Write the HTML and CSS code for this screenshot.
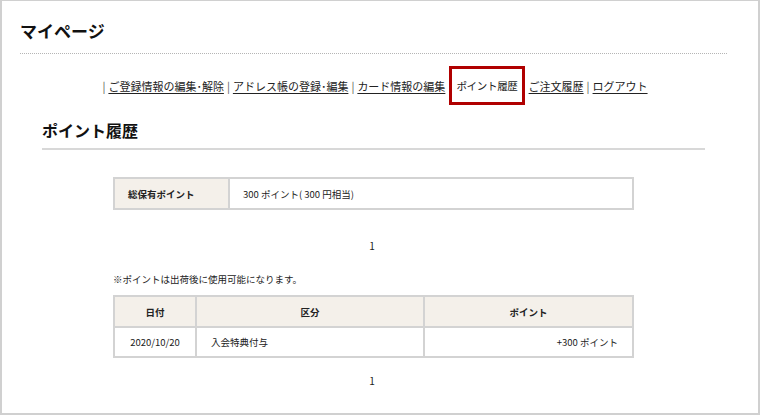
FILE: index.html
```html
<!DOCTYPE html>
<html lang="ja">
<head>
<meta charset="utf-8">
<title>マイページ</title>
<link rel="stylesheet" href="styles.css">
</head>
<body>
<div class="frame">
  <header class="page-head">
    <h1 class="page-title">マイページ</h1>
  </header>
  <nav class="mynav">
    <span class="sep">|</span>
    <a href="#" class="nav-link">ご登録情報の編集･解除</a>
    <span class="sep">|</span>
    <a href="#" class="nav-link">アドレス帳の登録･編集</a>
    <span class="sep">|</span>
    <a href="#" class="nav-link">カード情報の編集</a>
    <span class="nav-current">ポイント履歴</span>
    <a href="#" class="nav-link">ご注文履歴</a>
    <span class="sep">|</span>
    <a href="#" class="nav-link">ログアウト</a>
  </nav>
  <section class="content">
    <h2 class="section-title">ポイント履歴</h2>
    <table class="summary">
      <tr>
        <th class="summary-head">総保有ポイント</th>
        <td class="summary-val">300 ポイント( 300 円相当)</td>
      </tr>
    </table>
    <p class="pager">1</p>
    <div class="history">
      <p class="note">※ポイントは出荷後に使用可能になります。</p>
      <table class="hist-table">
        <thead>
          <tr>
            <th class="col-date">日付</th>
            <th class="col-kind">区分</th>
            <th class="col-pt">ポイント</th>
          </tr>
        </thead>
        <tbody>
          <tr>
            <td class="c-date">2020/10/20</td>
            <td class="c-kind">入会特典付与</td>
            <td class="c-pt">+300 ポイント</td>
          </tr>
        </tbody>
      </table>
    </div>
    <p class="pager pager-bottom">1</p>
  </section>
</div>
</body>
</html>
```

FILE: styles.css
```css
html, body {
  margin: 0;
  padding: 0;
  background: #fff;
}
body {
  font-family: "Noto Sans CJK JP", "Noto Sans", "Liberation Sans", sans-serif;
  color: #222;
}
.frame {
  width: 760px;
  height: 415px;
  box-sizing: border-box;
  border: 2px solid #d0d0d0;
  border-top-width: 1px;
  padding: 0 31px 0 18px;
  overflow: hidden;
}
.page-head {
  padding-top: 18px;
  padding-bottom: 10px;
  border-bottom: 1px dotted #b5b5b5;
}
.page-title {
  margin: 0;
  font-size: 17px;
  line-height: 24px;
  font-weight: 700;
  color: #111;
}
.mynav {
  margin-top: 12px;
  display: flex;
  justify-content: center;
  align-items: center;
  height: 39px;
  font-size: 11px;
  line-height: 14px;
  color: #222;
}
.sep {
  color: #555;
  padding: 0 3px;
}
.nav-link {
  color: #222;
  text-decoration: underline;
  text-underline-offset: 2px;
}
.nav-current {
  border: 3px solid #b00000;
  height: 33px;
  line-height: 33px;
  padding: 0 4px;
  margin: 0 4px;
  font-size: 10.5px;
  letter-spacing: -0.3px;
  color: #222;
}
.content {
  padding: 0 22px;
}
.section-title {
  margin: 14px 0 0;
  font-size: 16px;
  line-height: 22px;
  font-weight: 700;
  color: #111;
  padding-bottom: 7px;
  border-bottom: 2px solid #d8d8d8;
}
.summary {
  margin: 27px auto 0;
  width: 521px;
  border-collapse: collapse;
  table-layout: fixed;
  font-size: 9.5px;
}
.summary th, .summary td {
  border: 2px solid #d3d3d3;
  height: 29px;
  padding: 0 13px;
  text-align: left;
}
.summary-head {
  width: 87px;
  padding-left: 14px;
  background: #f4f0ea;
  font-weight: 700;
}
.pager {
  margin: 29px 0 0;
  text-align: center;
  font-size: 10px;
  line-height: 14px;
  padding-right: 3px;
}
.history {
  width: 521px;
  margin: 19px auto 0;
}
.note {
  margin: 0 0 9px;
  font-size: 9.5px;
  line-height: 14px;
}
.hist-table {
  width: 521px;
  border-collapse: collapse;
  table-layout: fixed;
  font-size: 9.5px;
}
.hist-table th, .hist-table td {
  border: 2px solid #d3d3d3;
  padding: 0 14px;
}
.hist-table th {
  background: #f4f0ea;
  font-weight: 700;
  height: 29px;
  text-align: center;
}
.hist-table td {
  height: 28px;
}
.col-date { width: 52px; }
.col-kind { width: 198px; }
.c-date { text-align: center; }
.c-kind { text-align: left; }
.c-pt { text-align: right; }
.pager-bottom {
  margin-top: 16px;
}
```
